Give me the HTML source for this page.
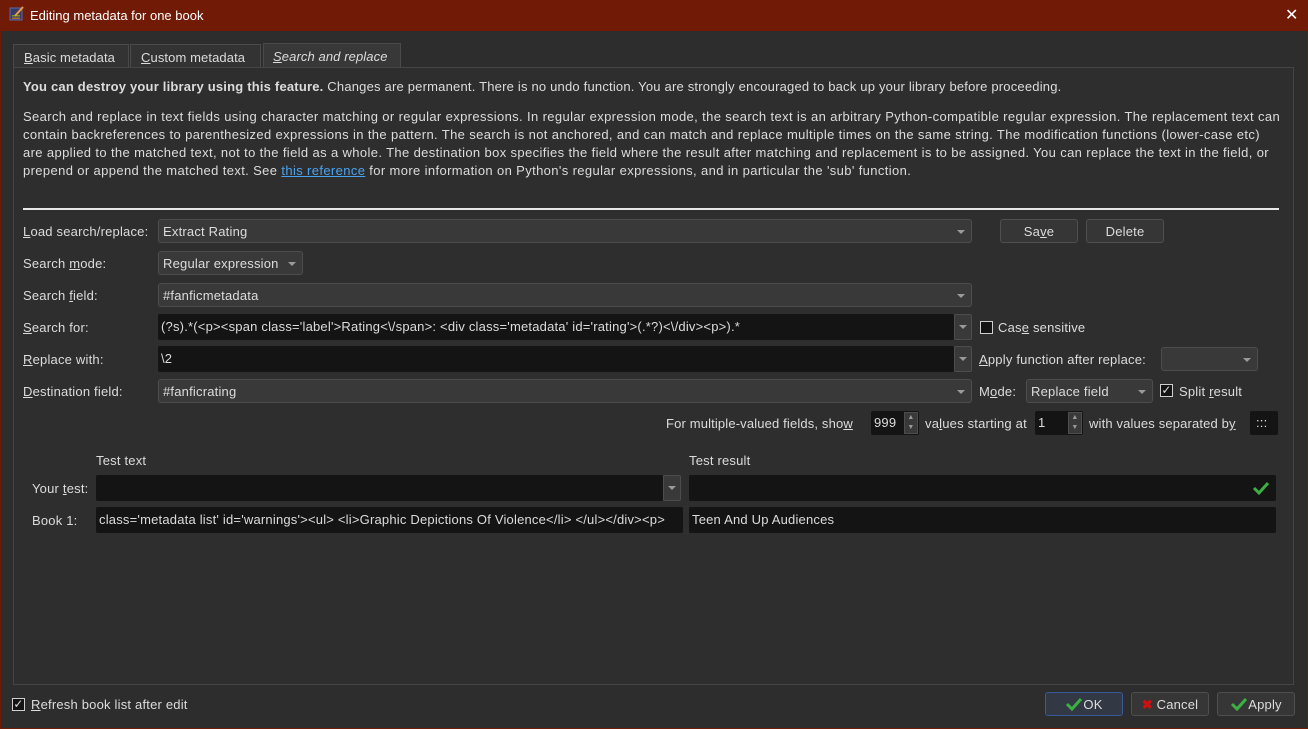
<!DOCTYPE html>
<html><head><meta charset="utf-8"><style>
*{box-sizing:border-box;margin:0;padding:0}
body{width:1308px;height:729px;background:#2d2d2d;font-family:"Liberation Sans",sans-serif;font-size:13px;letter-spacing:0.2px;color:#dcdcdc;position:relative;overflow:hidden}
.a{position:absolute;white-space:nowrap}
.win{position:absolute;left:0;top:0;width:1308px;height:729px;border:1px solid #6e1c08;border-top:none}
.title{left:0;top:0;width:1308px;height:31px;background:#711a05;color:#fff;font-size:13px}
.tab{position:absolute;top:44px;height:24px;border:1px solid #4a4a4a;border-bottom:none;background:#333;padding:5px 10px 0;font-size:13px;white-space:nowrap;letter-spacing:0.1px}
.panel{left:13px;top:67px;width:1281px;height:618px;border:1px solid #454545;background:#2e2e2e}
.cb{position:absolute;height:24px;background:#393939;border:1px solid #4d4d4d;border-radius:3px;padding:4px 4px 0;white-space:nowrap}
.in{position:absolute;height:26px;background:#141414;border-radius:2px;padding:5px 3px 0;white-space:nowrap}
.arr{position:absolute;right:6px;top:10px;width:0;height:0;border-left:4px solid transparent;border-right:4px solid transparent;border-top:4px solid #9a9a9a}
.dd{position:absolute;width:18px;height:26px;background:#393939;border:1px solid #4d4d4d;border-radius:2px}
.dd .arr{right:4px}
.btn{position:absolute;height:24px;background:#363636;border:1px solid #4f4f4f;border-radius:3px;text-align:center;padding-top:4px;white-space:nowrap}
.chk{position:absolute;width:13px;height:13px;border:1px solid #cfcfcf;background:#141414}
u{text-decoration:underline}
.p{letter-spacing:0.37px}
</style></head><body>
<div class="a title"></div>
<div class="win"></div>
<svg class="a" style="left:9px;top:6px" width="16" height="16" viewBox="0 0 16 16"><rect x="1" y="2" width="12" height="12" fill="#3a3a6a" stroke="#5a6ab0"/><rect x="3" y="9" width="8" height="1.5" fill="#6a9a2a"/><rect x="3" y="11.5" width="8" height="1.5" fill="#b07020"/><path d="M6 10 L14 1" stroke="#f0a030" stroke-width="2"/></svg>
<div class="a" style="left:30px;top:8px;color:#fff;letter-spacing:0">Editing metadata for one book</div>
<div class="a" style="left:1285px;top:5px;color:#fff;font-size:16px">✕</div>

<div class="tab" style="left:13px;width:116px"><u>B</u>asic metadata</div>
<div class="tab" style="left:130px;width:131px"><u>C</u>ustom metadata</div>
<div class="tab" style="left:263px;top:43px;height:25px;width:138px;background:#383838;font-style:italic;padding-left:9px"><u>S</u>earch and replace</div>
<div class="a panel"></div>

<div class="a" style="left:23px;top:79px;letter-spacing:0.2px"><b>You can destroy your library using this feature.</b> Changes are permanent. There is no undo function. You are strongly encouraged to back up your library before proceeding.</div>
<div class="a p" style="left:23px;top:109px">Search and replace in text fields using character matching or regular expressions. In regular expression mode, the search text is an arbitrary Python-compatible regular expression. The replacement text can</div>
<div class="a p" style="left:23px;top:127px">contain backreferences to parenthesized expressions in the pattern. The search is not anchored, and can match and replace multiple times on the same string. The modification functions (lower-case etc)</div>
<div class="a p" style="left:23px;top:145px">are applied to the matched text, not to the field as a whole. The destination box specifies the field where the result after matching and replacement is to be assigned. You can replace the text in the field, or</div>
<div class="a p" style="left:23px;top:163px">prepend or append the matched text. See <u style="color:#4aa3f0">this reference</u> for more information on Python's regular expressions, and in particular the 'sub' function.</div>
<div class="a" style="left:23px;top:208px;width:1256px;height:2px;background:#e8e8e8"></div>

<div class="a" style="left:23px;top:224px"><u>L</u>oad search/replace:</div>
<div class="cb" style="left:158px;top:219px;width:814px">Extract Rating<div class="arr"></div></div>
<div class="btn" style="left:1000px;top:219px;width:78px">Sa<u>v</u>e</div>
<div class="btn" style="left:1086px;top:219px;width:78px">Delete</div>

<div class="a" style="left:23px;top:256px">Search <u>m</u>ode:</div>
<div class="cb" style="left:158px;top:251px;width:145px">Regular expression<div class="arr"></div></div>

<div class="a" style="left:23px;top:288px">Search <u>f</u>ield:</div>
<div class="cb" style="left:158px;top:283px;width:814px">#fanficmetadata<div class="arr"></div></div>

<div class="a" style="left:23px;top:320px"><u>S</u>earch for:</div>
<div class="in" style="left:158px;top:314px;width:796px">(?s).*(&lt;p&gt;&lt;span class='label'&gt;Rating&lt;\/span&gt;: &lt;div class='metadata' id='rating'&gt;(.*?)&lt;\/div&gt;&lt;p&gt;).*</div>
<div class="dd" style="left:954px;top:314px"><div class="arr"></div></div>
<div class="chk" style="left:980px;top:321px"></div>
<div class="a" style="left:998px;top:320px">Cas<u>e</u> sensitive</div>

<div class="a" style="left:23px;top:352px"><u>R</u>eplace with:</div>
<div class="in" style="left:158px;top:346px;width:796px">\2</div>
<div class="dd" style="left:954px;top:346px"><div class="arr"></div></div>
<div class="a" style="left:979px;top:352px"><u>A</u>pply function after replace:</div>
<div class="cb" style="left:1161px;top:347px;width:97px"><div class="arr"></div></div>

<div class="a" style="left:23px;top:384px"><u>D</u>estination field:</div>
<div class="cb" style="left:158px;top:379px;width:814px">#fanficrating<div class="arr"></div></div>
<div class="a" style="left:979px;top:384px">M<u>o</u>de:</div>
<div class="cb" style="left:1026px;top:379px;width:127px">Replace field<div class="arr"></div></div>
<div class="chk" style="left:1160px;top:384px;font-size:12px;line-height:11px;text-align:center">✓</div>
<div class="a" style="left:1179px;top:384px">Split <u>r</u>esult</div>

<div class="a" style="left:666px;top:416px;letter-spacing:0.15px">For multiple-valued fields, sho<u>w</u></div>
<div class="in" style="left:871px;top:411px;width:48px;height:24px;padding-top:4px">999</div>
<div class="a" style="left:904px;top:412px;width:14px;height:22px;background:#393939;border:1px solid #4d4d4d;font-size:7px;color:#999;text-align:center;line-height:10px">▲<br>▼</div>
<div class="a" style="left:925px;top:416px">va<u>l</u>ues starting at</div>
<div class="in" style="left:1035px;top:411px;width:48px;height:24px;padding-top:4px">1</div>
<div class="a" style="left:1068px;top:412px;width:14px;height:22px;background:#393939;border:1px solid #4d4d4d;font-size:7px;color:#999;text-align:center;line-height:10px">▲<br>▼</div>
<div class="a" style="left:1089px;top:416px;letter-spacing:0.15px">with values separated b<u>y</u></div>
<div class="in" style="left:1250px;top:411px;width:28px;height:24px;padding-top:4px;padding-left:6px">:::</div>

<div class="a" style="left:96px;top:453px">Test text</div>
<div class="a" style="left:689px;top:453px">Test result</div>
<div class="a" style="left:32px;top:481px">Your <u>t</u>est:</div>
<div class="in" style="left:96px;top:475px;width:567px"></div>
<div class="dd" style="left:663px;top:475px"><div class="arr"></div></div>
<div class="in" style="left:689px;top:475px;width:587px"></div>
<svg class="a" style="left:1252px;top:480px" width="18" height="16" viewBox="0 0 18 16"><path d="M2 8 L7 13 L16 3" stroke="#3cb043" stroke-width="3" fill="none"/></svg>
<div class="a" style="left:32px;top:513px">Book 1:</div>
<div class="in" style="left:96px;top:507px;width:587px;overflow:hidden">class='metadata list' id='warnings'&gt;&lt;ul&gt; &lt;li&gt;Graphic Depictions Of Violence&lt;/li&gt; &lt;/ul&gt;&lt;/div&gt;&lt;p&gt;</div>
<div class="in" style="left:689px;top:507px;width:587px">Teen And Up Audiences</div>

<div class="chk" style="left:12px;top:698px;font-size:12px;line-height:11px;text-align:center">✓</div>
<div class="a" style="left:31px;top:697px"><u>R</u>efresh book list after edit</div>
<div class="btn" style="left:1045px;top:692px;width:78px;border-color:#3a5a9a;background:#323844">
<svg width="18" height="14" viewBox="0 0 18 14" style="vertical-align:-2px"><path d="M2 7 L7 12 L16 2" stroke="#3cb043" stroke-width="3" fill="none"/></svg>OK</div>
<div class="btn" style="left:1131px;top:692px;width:78px"><span style="color:#d01010;font-weight:bold">✖</span> Cancel</div>
<div class="btn" style="left:1217px;top:692px;width:78px"><svg width="18" height="14" viewBox="0 0 18 14" style="vertical-align:-2px"><path d="M2 7 L7 12 L16 2" stroke="#3cb043" stroke-width="3" fill="none"/></svg>Apply</div>
</body></html>
